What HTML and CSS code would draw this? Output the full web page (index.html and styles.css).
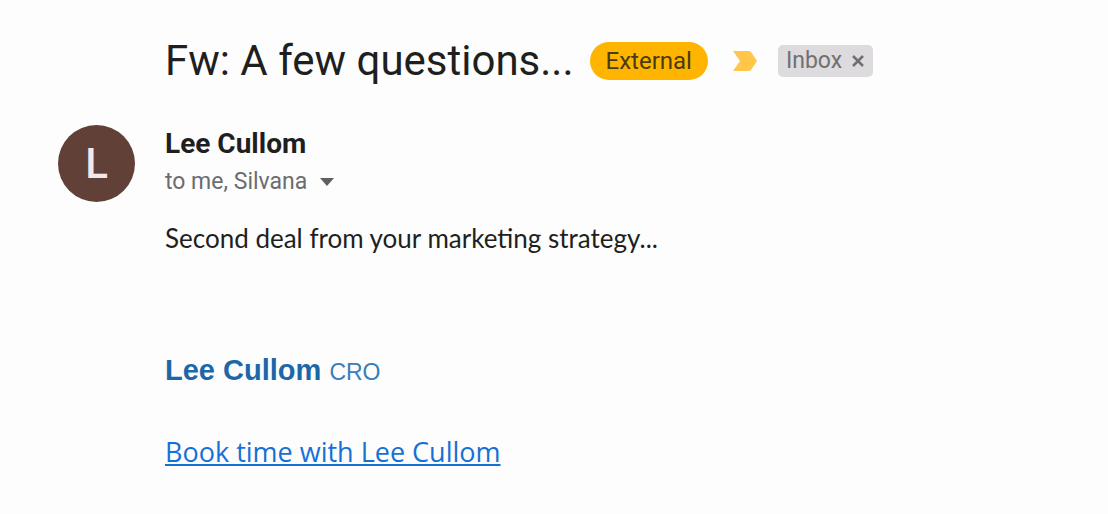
FILE: index.html
```html
<!DOCTYPE html>
<html lang="en">
<head>
<meta charset="utf-8">
<title>Fw: A few questions...</title>
<link rel="stylesheet" href="styles.css">
</head>
<body>
<main class="mail">
  <header class="subject">
    <h1 class="subject-text">Fw: A few questions...</h1>
    <span class="external">External</span>
    <button class="important" type="button" aria-label="Important">
      <svg width="26" height="20" viewBox="0 0 26 20" aria-hidden="true"><path d="M1 0H17Q18 0 19 1L25 10L19 19Q18 20 17 20H1L8 10Z" fill="#ffc64a"/></svg>
    </button>
    <span class="label">Inbox
      <button class="label-remove" type="button" aria-label="Remove label Inbox">
        <svg width="12" height="12" viewBox="0 0 12 12" aria-hidden="true"><path d="M1 1L11 11M11 1L1 11" stroke="#707072" stroke-width="2.500"/></svg>
      </button>
    </span>
  </header>
  <div class="avatar" aria-hidden="true">L</div>
  <section class="message">
    <h2 class="sender">Lee Cullom</h2>
    <button class="recipients" type="button">to me, Silvana
      <svg width="14" height="8" viewBox="0 0 14 8" aria-hidden="true"><path d="M0 0H14L7 8Z" fill="#5f6064"/></svg>
    </button>
    <p class="body-text">Second deal from your marketing strategy...</p>
    <p class="signature"><strong>Lee Cullom</strong> <span class="role">CRO</span></p>
    <a class="booking" href="#book">Book time with Lee Cullom</a>
  </section>
</main>
</body>
</html>
```
FILE: styles.css
```css
* { box-sizing: border-box; }
body { margin: 0; background: #fdfdfd; color: #1f1f1f; font-family: Roboto, sans-serif; }
button { border: 0; padding: 0; background: none; font: inherit; color: inherit; cursor: pointer; }
svg { display: block; }
.mail { display: grid; grid-template-columns: 77px 1fr; column-gap: 30px; padding: 36px 58px; }
.subject { grid-column: 2; display: flex; align-items: center; height: 50px; }
.subject-text { margin: 0 16px 0 0; font-size: 42px; line-height: 48px; font-weight: 400; white-space: nowrap; }
.external { padding: 0 16px; border-radius: 19px; background: #ffb500; color: #4a3b10; font-size: 24px; line-height: 38px; }
.important { margin: 0 20px 0 24px; }
.label { display: flex; align-items: center; gap: 10px; padding: 0 9px 0 8px; border-radius: 5px; background: #dddbde; color: #707072; font-size: 23px; line-height: 32px; }
.avatar { display: grid; place-items: center; width: 77px; height: 77px; margin-top: 39px; border-radius: 50%; background: #614137; color: #f3e8e8; font-size: 42px; font-weight: 500; }
.message { padding-top: 42px; }
.sender { margin: 0; font-size: 28px; line-height: 32px; font-weight: 700; }
.recipients { display: flex; align-items: center; gap: 13px; margin-top: 6px; color: #6b6c70; font-size: 23px; line-height: 32px; }
.body-text { margin: 22px 0 0; font-family: Lato, sans-serif; font-size: 26px; line-height: 36px; }
.signature { margin: 96px 0 0; color: #1b67a8; font-family: "Liberation Sans", sans-serif; font-size: 29px; line-height: 36px; }
.role { color: #3a7db8; font-size: 23px; }
.booking { display: inline-block; margin-top: 42px; color: #1670d6; font-family: "Open Sans", sans-serif; font-size: 27px; line-height: 40px; }
```
